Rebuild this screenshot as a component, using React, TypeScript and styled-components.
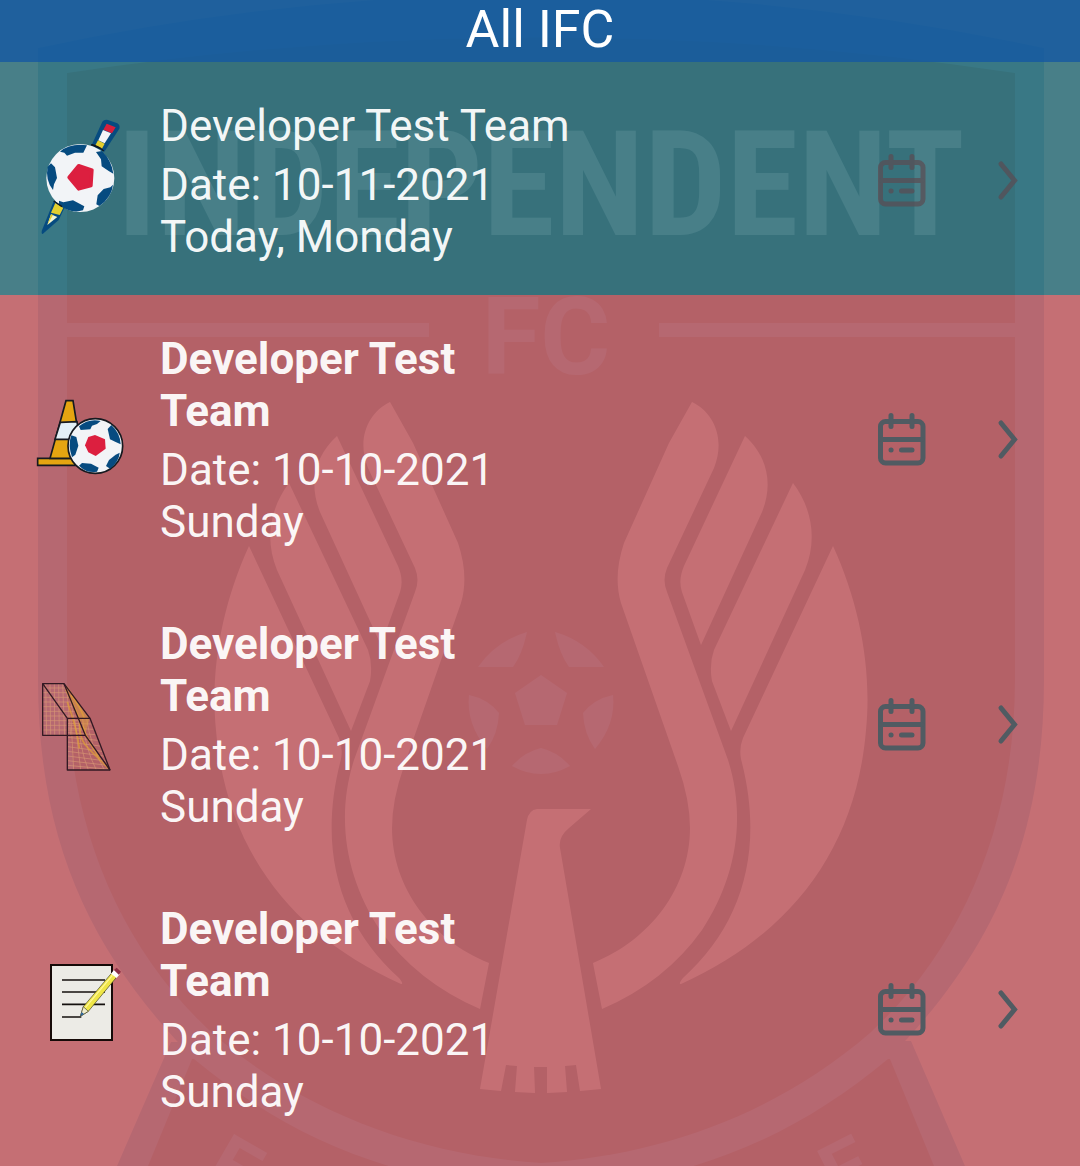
import React from "react";
import styled, { createGlobalStyle } from "styled-components";

const GlobalStyle = createGlobalStyle`
  *, *::before, *::after { box-sizing: border-box; }
  body {
    margin: 0;
    background: #ffffff;
    font-family: Roboto, "Noto Sans", sans-serif;
  }
`;

const CREST_FILL = "#aab9be";
const CREST_EDGE = "#b5dbf0";
const CREST_LIGHT = "#ffffff";

const Page = styled.div`
  position: relative;
  isolation: isolate;
  display: flex;
  flex-direction: column;
  min-height: 100vh;
  overflow: hidden;
`;

const CrestLayer = styled.svg`
  position: absolute;
  inset: 0;
  z-index: -1;
  width: 100%;
  height: 100%;
`;

const CrestLetters = styled.text<{ $condensed?: boolean }>`
  font-family: ${(p) => (p.$condensed ? '"Roboto Condensed", ' : "")} Roboto, sans-serif;
  font-weight: 700;
`;

const Header = styled.header`
  padding-bottom: 2px;
  background: rgba(19, 87, 152, 0.95);
  text-align: center;
`;

const Heading = styled.h1`
  margin: 0;
  color: #ffffff;
  font-size: 52px;
  font-weight: 400;
  line-height: 60px;
`;

const List = styled.ul`
  display: flex;
  flex: 1;
  flex-direction: column;
  margin: 0;
  padding: 0;
  list-style: none;

  &::after {
    content: "";
    flex: 1;
    background: rgba(182, 75, 81, 0.8);
  }
`;

const Row = styled.li<{ $today: boolean }>`
  display: flex;
  align-items: center;
  padding: 38px 42px 32px 20px;
  background: ${(p) => (p.$today ? "rgba(26, 95, 106, 0.8)" : "rgba(182, 75, 81, 0.8)")};
`;

const Thumb = styled.svg`
  flex: none;
  width: 120px;
  height: 130px;
`;

const Details = styled.div`
  flex: 0 1 412px;
  margin-left: 20px;
  color: rgba(255, 255, 255, 0.94);
  font-size: 44px;
  line-height: 52px;
`;

const TeamName = styled.h2<{ $strong: boolean }>`
  margin: 0 0 7px;
  font-size: 44px;
  font-weight: ${(p) => (p.$strong ? 700 : 400)};
  line-height: 52px;
`;

const Line = styled.p`
  margin: 0;
`;

const Actions = styled.div<{ $muted: boolean }>`
  display: flex;
  gap: 46px;
  margin-left: auto;
  color: ${(p) => (p.$muted ? "#5a4c53" : "#505b62")};
  opacity: ${(p) => (p.$muted ? 0.72 : 1)};
`;

const IconButton = styled.button`
  width: 60px;
  height: 60px;
  padding: 0;
  border: 0;
  background: none;
  color: inherit;
  cursor: pointer;

  svg {
    display: block;
    width: 100%;
    height: 100%;
  }
`;

const Wing = () => (
  <g fill={CREST_LIGHT}>
    <path d="M692 402C713 412 726 438 714 468L667 568Q662 580 667 592L728 760C747 820 735 880 702 930Q665 982 602 1009L593 963C650 940 690 888 690 828Q690 800 678 766L621 603Q613 576 624 543L669 443Z" />
    <path d="M745 436C766 455 774 482 762 512L701 645L682 592Q678 580 684 566Z" />
    <path d="M793 483C811 507 818 538 805 570L731 731L712 681Q709 664 714 650Z" />
    <path d="M833 546C860 605 872 670 866 730C856 850 790 935 681 984Q678 984 683 978C742 925 765 850 741 759Q739 748 743 738Z" />
  </g>
);

const Crest = () => (
  <CrestLayer viewBox="0 0 1080 1166" preserveAspectRatio="xMidYMin slice" aria-hidden="true">
    <path fill={CREST_EDGE} d="M171 1042L117 1166V1200H965V1166L911 1041Z" />
    <path fill={CREST_FILL} d="M192 1059L148 1166V1200H934V1166L890 1059Z" />
    <path
      fill={CREST_EDGE}
      d="M38 48Q541 -60 1044 48V680C1044 850 985 960 888 1059C790 1140 690 1182 541 1192C392 1182 292 1140 194 1059C97 960 38 850 38 680Z"
    />
    <path
      fill={CREST_FILL}
      d="M67 73Q541 2 1015 73V680C1015 820 965 945 870 1033C775 1115 660 1155 541 1163C422 1155 307 1115 212 1033C117 945 67 820 67 680Z"
    />
    <path fill={CREST_EDGE} d="M67 323H429V337H67ZM659 323H1015V337H659Z" />
    <CrestLetters $condensed x="541" y="235" fill={CREST_LIGHT} fontSize="146" textAnchor="middle">
      INDEPENDENT
    </CrestLetters>
    <CrestLetters x="546" y="374" fill={CREST_EDGE} fontSize="107" textAnchor="middle">
      FC
    </CrestLetters>
    <Wing />
    <g transform="translate(1082 0) scale(-1 1)">
      <Wing />
    </g>
    <path
      fill={CREST_LIGHT}
      d="M537 809H591L569 828Q558 837 560 848L601 1089L580 1091L576 1065L565 1066L567 1092L547 1093V1067H534L535 1093L515 1092L517 1066L506 1065L501 1091L480 1089L527 820Q529 810 537 809Z"
    />
    <g fill={CREST_EDGE}>
      <path d="M541 675L567 693L557 725H525L515 693Z" />
      <path d="M555 632Q586 641 604 667H569Q560 655 555 632Z" />
      <path d="M527 632Q496 641 478 667H513Q522 655 527 632Z" />
      <path d="M613 695Q616 724 595 749Q584 734 583 713Q594 699 613 695Z" />
      <path d="M469 695Q466 724 487 749Q498 734 499 713Q488 699 469 695Z" />
      <path d="M541 748Q558 752 570 766Q541 782 512 766Q524 752 541 748Z" />
    </g>
    <CrestLetters transform="translate(234 1134) rotate(30)" x="-5" y="57" fill={CREST_EDGE} fontSize="80">
      E
    </CrestLetters>
    <CrestLetters transform="translate(817 1151) rotate(-27)" x="-5" y="57" fill={CREST_EDGE} fontSize="80">
      E
    </CrestLetters>
  </CrestLayer>
);

const PencilBall = () => (
  <Thumb viewBox="0 51 360 390" aria-hidden="true">
    <path d="M247 65Q253 57 264 60L292 70Q301 76 298 86L253 155L214 137Z" fill="#064b80" />
    <path d="M260 71L287 82L276 100L250 89Z" fill="#d71f3c" />
    <path d="M249 90L273 100L254 130L235 121Z" fill="#f4f5f8" />
    <path d="M234 121L254 131L245 148L225 138Z" fill="#e3cf2f" />
    <path d="M214 134Q235 137 251 153" fill="none" stroke="#101820" strokeWidth="4" />
    <path d="M101 304L135 320L116 360L68 402Q63 402 66 391Z" fill="#064b80" />
    <path d="M106 309L130 323L119 345L93 338Z" fill="#e3cf2f" />
    <path d="M93 343L112 351L82 375Z" fill="#f4f5d0" />
    <path d="M93 343L99 345L82 375Z" fill="#e3cf2f" />
    <circle cx="181" cy="234" r="102" fill="#f2f4f7" />
    <path d="M120 155Q150 129 201 136L190 158L165 158L141 167L133 158Z" fill="#064b80" />
    <path d="M228 156L246 153Q275 181 280 221L266 213L245 199L243 178Z" fill="#064b80" />
    <path d="M279 254Q275 292 238 318L229 313L233 286L251 267L271 262Z" fill="#064b80" />
    <path d="M189 331Q153 342 117 315V302L130 307L159 301L193 319Z" fill="#064b80" />
    <path d="M99 270Q75 239 83 200L93 190L105 202L111 234L102 253Z" fill="#064b80" />
    <path
      d="M176 197L216 210L213 257L176 267L147 232Z"
      fill="#dc1f3f"
      stroke="#dc1f3f"
      strokeWidth="10"
      strokeLinejoin="round"
    />
    <path d="M101 303L126 320M214 134L241 145" stroke="#111820" strokeWidth="4" />
  </Thumb>
);

const ConeBall = () => (
  <Thumb viewBox="0 -12 360 390" aria-hidden="true">
    <g stroke="#161a20" strokeWidth="5">
      <path d="M53 235H165V256H53Z" fill="#e5a511" />
      <path d="M138 62H159L187 235H90Z" fill="#e5a511" />
      <path d="M121 127L171 125L179 178H105Z" fill="#e3f0f6" />
      <circle cx="226" cy="198" r="82" fill="#f2f4f7" />
    </g>
    <path d="M177 139Q205 115 242 123L231 132L216 137L211 148L182 150Z" fill="#064b80" />
    <path d="M263 147L274 135Q300 158 302 193L287 186L270 178Z" fill="#064b80" />
    <path d="M299 218Q297 246 270 266L258 258L267 240L287 224Z" fill="#064b80" />
    <path d="M231 275Q201 281 177 257L186 249L213 251L236 263Z" fill="#064b80" />
    <path d="M156 232Q143 195 154 166L169 171L175 197L166 224Z" fill="#064b80" />
    <path d="M225 165L255 178L257 206L227 228L205 217L195 196L205 171Z" fill="#dc1f3f" />
  </Thumb>
);

const Goal = () => (
  <Thumb viewBox="0 -27 360 390" aria-hidden="true">
    <g fill="none" stroke="#dc9d76" strokeWidth="2" opacity="0.85">
      <path d="M77 41L80 196M90 41L92 196M103 41L104 196M116 41L118 196M128 41L134 196M141 62L152 196M150 82L171 196M68 54H139M68 68H144M68 82H150M68 96H156M68 110H162M68 124H167M68 138H172M68 152H178M68 166H184M68 180H190" />
      <path d="M153 146L161 300M164 146L182 300M176 146Q177 230 205 300M188 146Q193 230 229 300M200 146Q211 226 253 300M143 160L216 162M143 174L221 178M143 188L226 194M143 202L233 211M143 216L240 228M143 230L246 244M143 244L252 258M143 258L259 273M143 272L264 286M143 286L268 298" />
    </g>
    <path d="M132 41Q151 100 183 151L195 198L208 148L145 52Z" fill="#dda03c" opacity="0.5" />
    <path
      d="M137 58Q160 102 180 150Q174 210 208 238L266 296M142 96Q172 180 178 235M153 75Q181 110 193 145M188 168Q204 215 240 268"
      fill="none"
      stroke="#df9f35"
      strokeWidth="5"
      opacity="0.7"
    />
    <g fill="none" stroke="#321923" strokeWidth="4" strokeLinejoin="round">
      <path d="M68 41H132L196 196H68Z" />
      <path d="M68 41L142 145H210L270 300H142V145" />
      <path d="M132 41L210 145M196 196L270 300" />
    </g>
  </Thumb>
);

const Notes = () => (
  <Thumb viewBox="0 -12 360 390" aria-hidden="true">
    <path d="M93 45H276V270H93Z" fill="#ecebe6" stroke="#160a08" strokeWidth="6" />
    <path d="M126 90H255M126 126H255M126 163H255M126 201H184" fill="none" stroke="#14100e" strokeWidth="5" />
    <path d="M181 199L190 170L276 68L291 80L205 184Z" fill="#efe647" stroke="#41401f" strokeWidth="2" />
    <path d="M181 199L190 170L205 184Z" fill="#efeccb" stroke="#41401f" strokeWidth="2" />
    <path d="M181 199L185 186L192 192Z" fill="#28619c" />
    <path d="M196 173L277 76" stroke="#fff79a" strokeWidth="4" />
    <path d="M273 71L282 60L299 73L290 84Z" fill="#ffffff" />
    <path d="M282 60L290 53L303 65L296 74Z" fill="#8e3046" />
  </Thumb>
);

const CalendarIcon = () => (
  <svg viewBox="0 1 60 60" fill="none" stroke="currentColor" strokeWidth="5" strokeLinecap="round" aria-hidden="true">
    <rect x="8.5" y="11.5" width="42.5" height="41.5" rx="5" />
    <path d="M9 29.5H50M19 5.5V16.5M40 5.5V16.5M19 40H19.1M29.5 40H40" />
  </svg>
);

const ChevronIcon = () => (
  <svg viewBox="0 1 60 60" fill="none" stroke="currentColor" strokeWidth="5" strokeLinecap="round" aria-hidden="true">
    <path d="M23 13L36.5 29.5L23 46" />
  </svg>
);

type Event = {
  team: string;
  date: string;
  day: string;
  today: boolean;
  Picture: () => React.JSX.Element;
};

const events: Event[] = [
  { team: "Developer Test Team", date: "10-11-2021", day: "Today, Monday", today: true, Picture: PencilBall },
  { team: "Developer Test Team", date: "10-10-2021", day: "Sunday", today: false, Picture: ConeBall },
  { team: "Developer Test Team", date: "10-10-2021", day: "Sunday", today: false, Picture: Goal },
  { team: "Developer Test Team", date: "10-10-2021", day: "Sunday", today: false, Picture: Notes },
];

export default function App() {
  return (
    <>
      <GlobalStyle />
      <Page>
        <Crest />
        <Header>
          <Heading>All IFC</Heading>
        </Header>
        <List>
          {events.map(({ team, date, day, today, Picture }, index) => (
            <Row key={index} $today={today}>
              <Picture />
              <Details>
                <TeamName $strong={!today}>{team}</TeamName>
                <Line>Date: {date}</Line>
                <Line>{day}</Line>
              </Details>
              <Actions $muted={today}>
                <IconButton type="button" aria-label="Add to calendar">
                  <CalendarIcon />
                </IconButton>
                <IconButton type="button" aria-label="Open event">
                  <ChevronIcon />
                </IconButton>
              </Actions>
            </Row>
          ))}
        </List>
      </Page>
    </>
  );
}
